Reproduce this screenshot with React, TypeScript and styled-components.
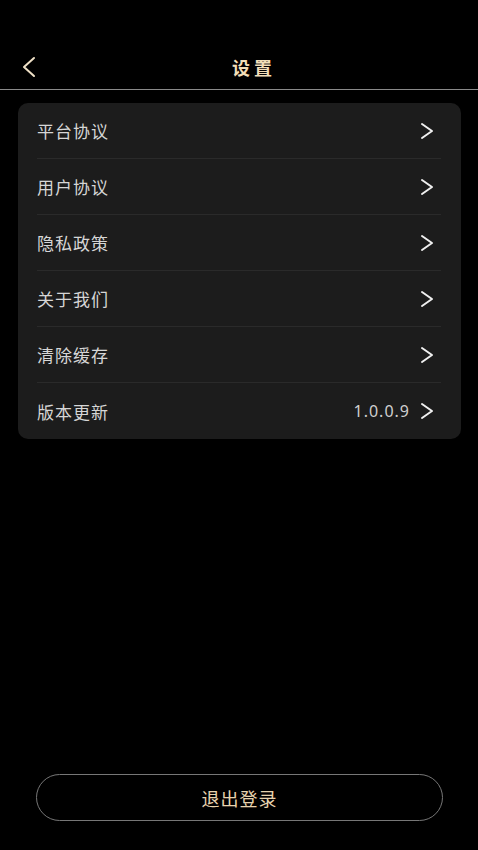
import styled, { createGlobalStyle } from 'styled-components';

const GlobalStyle = createGlobalStyle`
  html, body {
    margin: 0;
    padding: 0;
    background: #000;
  }
  body {
    font-family: "Noto Sans CJK SC", "Noto Sans", sans-serif;
  }
`;

const items = [
  { label: '平台协议' },
  { label: '用户协议' },
  { label: '隐私政策' },
  { label: '关于我们' },
  { label: '清除缓存' },
  { label: '版本更新', value: '1.0.0.9' },
];

const RightArrow = () => (
  <svg width="16" height="18" viewBox="0 0 16 18" fill="none">
    <path
      d="M3 2 L13 9 L3 16"
      stroke="#f0f0f0"
      strokeWidth="2"
      strokeLinecap="round"
      strokeLinejoin="round"
    />
  </svg>
);

const BackArrow = () => (
  <svg width="16" height="22" viewBox="0 0 16 22" fill="none">
    <path
      d="M13 2 L3 11 L13 20"
      stroke="#efe0c6"
      strokeWidth="2"
      strokeLinecap="round"
      strokeLinejoin="round"
    />
  </svg>
);

const App = () => {
  return (
    <>
      <GlobalStyle />
      <Page>
        <Header>
          <BackButton>
            <BackArrow />
          </BackButton>
          <Title>设置</Title>
          <div />
        </Header>
        <Card>
          {items.map((item) => (
            <Row key={item.label}>
              <Label>{item.label}</Label>
              <Right>
                {item.value && <Value>{item.value}</Value>}
                <RightArrow />
              </Right>
            </Row>
          ))}
        </Card>
        <Spacer />
        <Footer>
          <LogoutButton>退出登录</LogoutButton>
        </Footer>
      </Page>
    </>
  );
};

const Page = styled.div`
  width: 478px;
  height: 850px;
  display: flex;
  flex-direction: column;
  background: #000;
`;

const Header = styled.header`
  height: 90px;
  box-sizing: border-box;
  padding: 44px 0 0;
  display: grid;
  grid-template-columns: 1fr auto 1fr;
  align-items: center;
  border-bottom: 1px solid #8a8a8a;
`;

const BackButton = styled.div`
  display: flex;
  align-items: center;
  padding-left: 21px;
`;

const Title = styled.h1`
  margin: 0 0 0 30px;
  font-size: 18px;
  line-height: 1;
  font-weight: 700;
  letter-spacing: 4px;
  color: #f2deb8;
`;

const Card = styled.div`
  margin: 13px 17px 0 18px;
  background: #1c1c1c;
  border-radius: 10px;
  padding: 0 20px 0 19px;
`;

const Row = styled.div`
  height: 56px;
  box-sizing: border-box;
  display: flex;
  align-items: center;
  justify-content: space-between;
  border-bottom: 1px solid #2a2a2a;

  &:last-child {
    border-bottom: none;
  }
`;

const Label = styled.span`
  font-size: 17px;
  letter-spacing: 1px;
  color: #d6d6d6;
`;

const Right = styled.div`
  display: flex;
  align-items: center;
  gap: 9px;
  margin-right: 6px;
`;

const Value = styled.span`
  font-family: "Noto Sans", sans-serif;
  font-size: 16px;
  color: #cfcfcf;
  letter-spacing: 1px;
`;

const Spacer = styled.div`
  flex: 1;
`;

const Footer = styled.div`
  padding: 0 35px 29px 36px;
`;

const LogoutButton = styled.button`
  width: 100%;
  height: 47px;
  border: 1px solid #777;
  border-radius: 24px;
  background: transparent;
  color: #e8d3ae;
  font-family: "Noto Sans CJK SC", sans-serif;
  font-size: 18px;
  letter-spacing: 1px;
`;

export default App;
